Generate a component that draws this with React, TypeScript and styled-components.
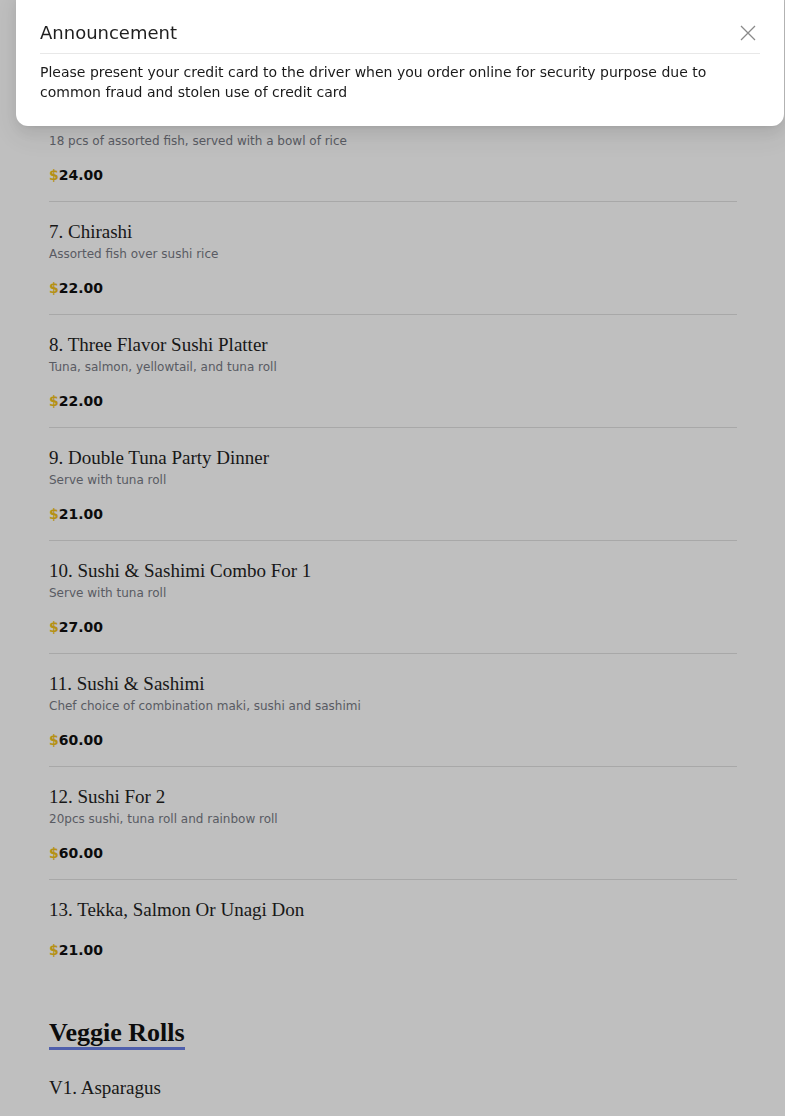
import React from 'react';
import styled, { createGlobalStyle } from 'styled-components';

const GlobalStyle = createGlobalStyle`
  html, body {
    margin: 0;
    padding: 0;
    background: #ffffff;
    overflow: hidden;
  }
  body {
    font-family: "DejaVu Sans", "Noto Sans", sans-serif;
  }
`;

const Page = styled.div`
  height: 1116px;
  overflow: hidden;
  padding: 89px 48px 0 49px;
  box-sizing: border-box;
`;

const MenuList = styled.div`
  display: flex;
  flex-direction: column;
`;

const Item = styled.div<{ $last?: boolean }>`
  padding: 16px 0 ${(p) => (p.$last ? '0' : '16px')};
  border-bottom: ${(p) => (p.$last ? 'none' : '1px solid #e0e0e0')};
`;

const ItemTitle = styled.div`
  font-family: "Liberation Serif", "DejaVu Serif", serif;
  font-size: 19px;
  line-height: 28px;
  color: #1f1f1f;
`;

const ItemDesc = styled.div`
  font-size: 12px;
  line-height: 16px;
  color: #777a84;
`;

const Price = styled.div`
  margin-top: 16px;
  font-size: 14px;
  line-height: 20px;
  font-weight: 700;
  color: #111;
`;

const Dollar = styled.span`
  color: #f2c21c;
`;

const SectionTitle = styled.h2`
  display: inline-block;
  align-self: flex-start;
  margin: 59px 0 8px;
  font-family: "Liberation Serif", "DejaVu Serif", serif;
  font-size: 26px;
  line-height: 28px;
  font-weight: 700;
  color: #111;
  border-bottom: 3px solid #6a7fe6;
`;

const Overlay = styled.div`
  position: fixed;
  inset: 0;
  background: rgba(0, 0, 0, 0.25);
`;

const Modal = styled.div`
  position: fixed;
  top: -12px;
  left: 16px;
  right: 1px;
  background: #fff;
  border-radius: 12px;
  padding: 33px 24px 24px;
  box-shadow: 0 6px 16px rgba(0, 0, 0, 0.08), 0 3px 6px -4px rgba(0, 0, 0, 0.12),
    0 9px 28px 8px rgba(0, 0, 0, 0.05);
`;

const ModalHeader = styled.div`
  display: flex;
  align-items: center;
  justify-content: space-between;
  padding-bottom: 8px;
  border-bottom: 1px solid #e8e8e8;
`;

const ModalTitle = styled.div`
  font-size: 18px;
  line-height: 24px;
  color: #1f1f1f;
`;

const CloseButton = styled.button`
  width: 24px;
  height: 24px;
  padding: 0;
  border: none;
  background: none;
  display: flex;
  align-items: center;
  justify-content: center;
  color: #8a8a8a;
  cursor: pointer;
`;

const ModalBody = styled.div`
  margin-top: 8px;
  font-size: 14px;
  line-height: 20px;
  color: #1a1a1a;
`;

interface MenuItem {
  name: string;
  desc?: string;
  price: string;
}

const items: MenuItem[] = [
  { name: '6. Sushi Deluxe', desc: '18 pcs of assorted fish, served with a bowl of rice', price: '24.00' },
  { name: '7. Chirashi', desc: 'Assorted fish over sushi rice', price: '22.00' },
  { name: '8. Three Flavor Sushi Platter', desc: 'Tuna, salmon, yellowtail, and tuna roll', price: '22.00' },
  { name: '9. Double Tuna Party Dinner', desc: 'Serve with tuna roll', price: '21.00' },
  { name: '10. Sushi & Sashimi Combo For 1', desc: 'Serve with tuna roll', price: '27.00' },
  { name: '11. Sushi & Sashimi', desc: 'Chef choice of combination maki, sushi and sashimi', price: '60.00' },
  { name: '12. Sushi For 2', desc: '20pcs sushi, tuna roll and rainbow roll', price: '60.00' },
  { name: '13. Tekka, Salmon Or Unagi Don', price: '21.00' },
];

const App: React.FC = () => {
  return (
    <>
      <GlobalStyle />
      <Page>
        <MenuList>
          {items.map((it, i) => (
            <Item key={it.name} $last={i === items.length - 1}>
              <ItemTitle>{it.name}</ItemTitle>
              {it.desc && <ItemDesc>{it.desc}</ItemDesc>}
              <Price>
                <Dollar>$</Dollar>
                {it.price}
              </Price>
            </Item>
          ))}
          <SectionTitle>Veggie Rolls</SectionTitle>
          <Item $last>
            <ItemTitle>V1. Asparagus</ItemTitle>
          </Item>
        </MenuList>
      </Page>
      <Overlay />
      <Modal>
        <ModalHeader>
          <ModalTitle>Announcement</ModalTitle>
          <CloseButton aria-label="close">
            <svg width="16" height="16" viewBox="0 0 16 16" fill="none" stroke="currentColor" strokeWidth="1.3">
              <path d="M1 1L15 15M15 1L1 15" />
            </svg>
          </CloseButton>
        </ModalHeader>
        <ModalBody>
          Please present your credit card to the driver when you order online for security purpose due to
          common fraud and stolen use of credit card
        </ModalBody>
      </Modal>
    </>
  );
};

export default App;
